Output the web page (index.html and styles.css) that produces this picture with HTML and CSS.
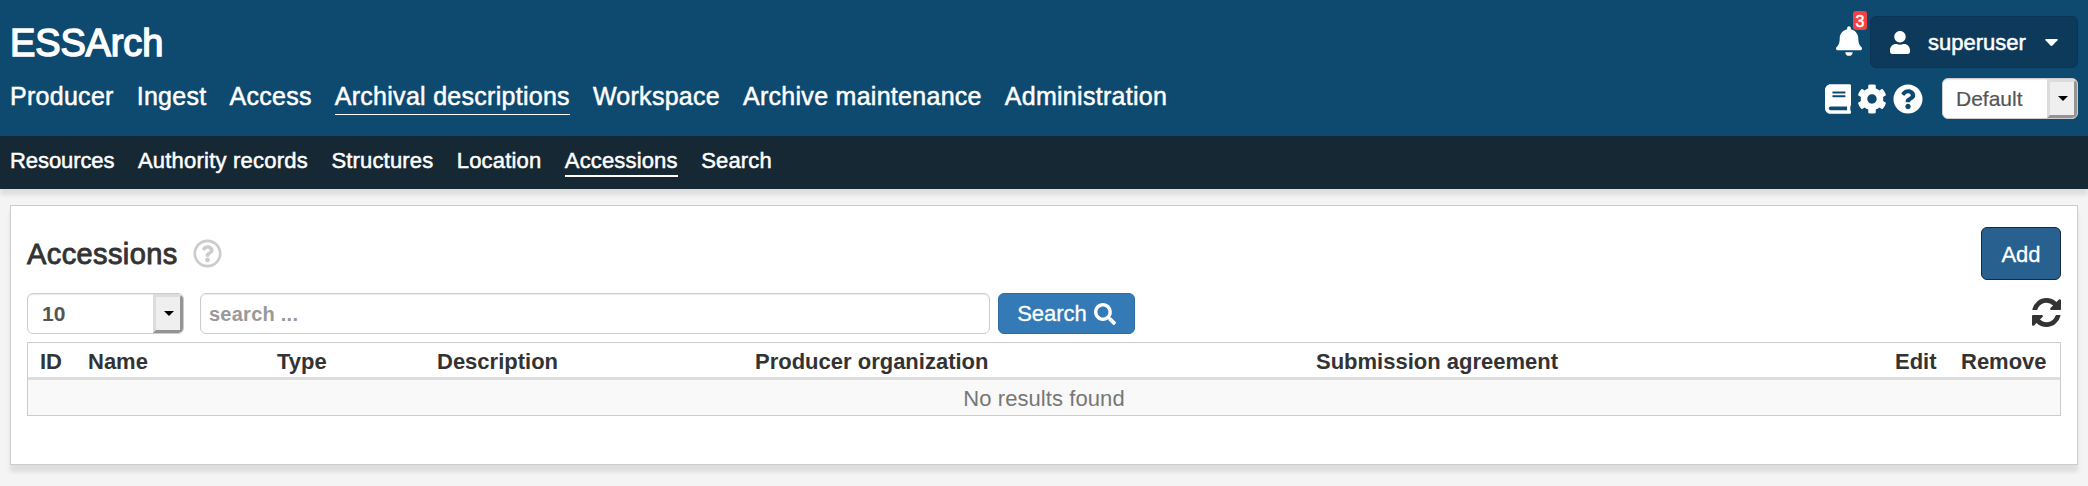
FILE: index.html
```html
<!DOCTYPE html>
<html lang="en">
<head>
<meta charset="utf-8">
<title>ESSArch</title>
<link rel="stylesheet" href="styles.css">
</head>
<body>
<header class="top">
  <div class="brand-col">
    <h1 class="brand">ESSArch</h1>
    <nav class="nav">
      <a>Producer</a><a>Ingest</a><a>Access</a><a class="active">Archival descriptions</a><a>Workspace</a><a>Archive maintenance</a><a>Administration</a>
    </nav>
  </div>
  <div class="tools">
    <div class="tool-row user-row">
      <div class="bell">
        <svg viewBox="0 0 448 512" width="26" height="30"><path d="M224 512c35.32 0 63.97-28.65 63.97-64H160.03c0 35.35 28.65 64 63.97 64zm215.39-149.71c-19.32-20.76-55.47-51.99-55.47-154.29 0-77.7-54.48-139.9-127.94-155.16V32c0-17.67-14.32-32-31.98-32s-31.98 14.33-31.98 32v20.84C118.56 68.1 64.08 130.3 64.08 208c0 102.3-36.15 133.53-55.47 154.29-6 6.45-8.66 14.16-8.61 21.71.11 16.4 12.98 32 32.1 32h383.8c19.12 0 32-15.6 32.1-32 .05-7.55-2.61-15.27-8.61-21.71z"/></svg>
        <span class="badge">3</span>
      </div>
      <div class="user">
        <svg viewBox="0 0 448 512" width="20" height="23"><path d="M224 256c70.700 0 128-57.300 128-128S294.700 0 224 0 96 57.300 96 128s57.300 128 128 128zm89.600 32h-16.700c-22.200 10.200-46.900 16-72.900 16s-50.600-5.800-72.900-16h-16.700C60.200 288 0 348.200 0 422.400V464c0 26.500 21.500 48 48 48h352c26.500 0 48-21.500 48-48v-41.600c0-74.200-60.200-134.400-134.400-134.400z"/></svg>
        <span class="user-name">superuser</span>
        <svg class="caret" viewBox="0 0 13 7" width="13" height="7"><path d="M1 0h11q1.400 .3.500 1.300l-5 5.200q-1 .9-2 0l-5-5.200Q-.4.300 1 0z"/></svg>
      </div>
    </div>
    <div class="tool-row icon-row">
      <svg viewBox="0 0 448 512" width="26" height="30"><path d="M448 360V24c0-13.300-10.700-24-24-24H96C43 0 0 43 0 96v320c0 53 43 96 96 96h328c13.300 0 24-10.700 24-24v-16c0-7.500-3.500-14.300-8.900-18.700-4.200-15.400-4.200-59.300 0-74.700 5.400-4.300 8.900-11.100 8.900-18.600zM128 134c0-3.300 2.700-6 6-6h212c3.300 0 6 2.700 6 6v20c0 3.300-2.700 6-6 6H134c-3.300 0-6-2.700-6-6v-20zm0 64c0-3.300 2.700-6 6-6h212c3.300 0 6 2.700 6 6v20c0 3.300-2.700 6-6 6H134c-3.300 0-6-2.700-6-6v-20zm253.400 250H96c-17.700 0-32-14.300-32-32 0-17.600 14.400-32 32-32h285.400c-1.900 17.100-1.900 46.900 0 64z"/></svg>
      <svg viewBox="0 0 512 512" width="30" height="30"><path d="M487.400 315.700l-42.600-24.600c4.300-23.200 4.300-47 0-70.200l42.600-24.600c4.900-2.800 7.100-8.600 5.500-14-11.100-35.600-30-67.800-54.700-94.600-3.800-4.100-10-5.100-14.800-2.300L380.800 110c-17.900-15.400-38.500-27.300-60.800-35.100V25.800c0-5.600-3.900-10.500-9.400-11.700-36.700-8.200-74.300-7.800-109.200 0-5.500 1.200-9.400 6.100-9.400 11.700V75c-22.200 7.900-42.800 19.800-60.800 35.100L88.700 85.500c-4.900-2.800-11-1.900-14.800 2.300-24.700 26.700-43.600 58.900-54.700 94.600-1.700 5.400.6 11.200 5.500 14L67.300 221c-4.300 23.200-4.300 47 0 70.200l-42.600 24.600c-4.900 2.800-7.100 8.600-5.500 14 11.100 35.600 30 67.800 54.700 94.600 3.800 4.100 10 5.100 14.800 2.300l42.600-24.600c17.900 15.400 38.500 27.300 60.800 35.100v49.200c0 5.600 3.900 10.500 9.400 11.700 36.700 8.200 74.300 7.800 109.200 0 5.500-1.200 9.400-6.100 9.400-11.700v-49.200c22.200-7.900 42.800-19.800 60.800-35.100l42.600 24.600c4.900 2.800 11 1.900 14.800-2.300 24.700-26.700 43.600-58.900 54.700-94.600 1.500-5.500-.7-11.300-5.600-14.100zM256 336c-44.100 0-80-35.900-80-80s35.900-80 80-80 80 35.900 80 80-35.900 80-80 80z"/></svg>
      <svg viewBox="0 0 512 512" width="30" height="30"><path d="M504 256c0 136.997-111.043 248-248 248S8 392.997 8 256C8 119.083 119.043 8 256 8s248 111.083 248 248zM262.655 90c-54.497 0-89.255 22.957-116.549 63.758-3.536 5.286-2.353 12.415 2.715 16.258l34.699 26.310c5.205 3.947 12.621 3.008 16.665-2.122 17.864-22.658 30.113-35.797 57.303-35.797 20.429 0 45.698 13.148 45.698 32.958 0 14.976-12.363 22.667-32.534 33.976C247.128 238.528 216 254.941 216 296v4c0 6.627 5.373 12 12 12h56c6.627 0 12-5.373 12-12v-1.333c0-28.462 83.186-29.647 83.186-106.667 0-58.002-60.165-102-116.531-102zM256 338c-25.365 0-46 20.635-46 46 0 25.364 20.635 46 46 46s46-20.636 46-46c0-25.365-20.635-46-46-46z"/></svg>
      <div class="combo combo-default"><span class="combo-text">Default</span><span class="combo-btn"><i class="tri"></i></span></div>
    </div>
  </div>
</header>
<nav class="subnav">
  <a class="tight">Resources</a><a class="loose">Authority records</a><a>Structures</a><a>Location</a><a class="active">Accessions</a><a>Search</a>
</nav>
<main class="panel">
  <div class="title-row">
    <h2 class="title">Accessions</h2>
    <svg class="help" viewBox="0 0 512 512" width="29" height="29"><path d="M256 8C119.043 8 8 119.083 8 256c0 136.997 111.043 248 248 248s248-111.003 248-248C504 119.083 392.957 8 256 8zm0 448c-110.532 0-200-89.431-200-200 0-110.495 89.472-200 200-200 110.491 0 200 89.471 200 200 0 110.530-89.431 200-200 200zm107.244-255.200c0 67.052-72.421 68.084-72.421 92.863V300c0 6.627-5.373 12-12 12h-45.647c-6.627 0-12-5.373-12-12v-8.659c0-35.745 27.100-50.034 47.579-61.516 17.561-9.845 28.324-16.541 28.324-29.579 0-17.246-21.999-28.693-39.784-28.693-23.189 0-33.894 10.977-48.942 29.969-4.057 5.120-11.460 6.071-16.666 2.124l-27.824-21.098c-5.107-3.872-6.251-11.066-2.644-16.363C184.846 131.491 214.940 112 261.794 112c49.071 0 101.450 38.304 101.450 88.800zM298 368c0 23.159-18.841 42-42 42s-42-18.841-42-42 18.841-42 42-42 42 18.841 42 42z"/></svg>
    <button class="btn add">Add</button>
  </div>
  <div class="filter-row">
    <div class="combo combo-count"><span class="combo-text">10</span><span class="combo-btn"><i class="tri"></i></span></div>
    <input class="search-input" type="text" placeholder="search ...">
    <button class="btn search">Search <svg viewBox="0 0 512 512" width="22" height="22"><path d="M505 442.700L405.300 343c-4.500-4.500-10.600-7-17-7H372c27.600-35.300 44-79.700 44-128C416 93.100 322.900 0 208 0S0 93.100 0 208s93.100 208 208 208c48.300 0 92.700-16.400 128-44v16.300c0 6.400 2.500 12.500 7 17l99.700 99.700c9.400 9.400 24.600 9.400 33.900 0l28.300-28.300c9.400-9.400 9.400-24.600.1-34zM208 336c-70.700 0-128-57.200-128-128 0-70.700 57.200-128 128-128 70.700 0 128 57.200 128 128 0 70.700-57.200 128-128 128z"/></svg></button>
    <svg class="refresh" viewBox="0 0 1536 1536" width="29" height="29"><path d="M1511 928q0 5-1 7-64 268-268 434.500T764 1536q-146 0-282.500-55T238 1324l-129 129q-19 19-45 19t-45-19-19-45V960q0-26 19-45t45-19h448q26 0 45 19t19 45-19 45l-137 137q71 66 161 102t187 36q134 0 250-65t186-179q11-17 53-117 8-23 30-23h192q13 0 22.500 9.500t9.500 22.500zm25-800v448q0 26-19 45t-45 19h-448q-26 0-45-19t-19-45 19-45l138-138Q969 256 768 256q-134 0-250 65T332 500q-11 17-53 117-8 23-30 23H50q-13 0-22.500-9.500T18 608v-7q65-268 270-434.500T768 0q146 0 284 55.500T1297 212l130-129q19-19 45-19t45 19 19 45z"/></svg>
  </div>
  <table class="grid">
    <colgroup><col class="c-id"><col class="c-name"><col class="c-type"><col class="c-desc"><col class="c-prod"><col class="c-sub"><col class="c-edit"><col class="c-rem"></colgroup>
    <thead><tr><th>ID</th><th>Name</th><th>Type</th><th>Description</th><th>Producer organization</th><th>Submission agreement</th><th>Edit</th><th>Remove</th></tr></thead>
    <tbody><tr><td colspan="8">No results found</td></tr></tbody>
  </table>
</main>
</body>
</html>
```
FILE: styles.css
```css
* { box-sizing: border-box; }
body {
  margin: 0;
  height: 486px;
  overflow: hidden;
  background: #f4f4f4;
  color: #333;
  font-family: "Liberation Sans", Arial, sans-serif;
  font-size: 22px;
}
svg { display: block; fill: currentColor; flex: none; }
h1, h2 { margin: 0; font-weight: 400; }

.top {
  display: flex;
  justify-content: space-between;
  height: 136px;
  padding: 0 10px;
  background: #0e4a70;
  color: #fff;
}
.brand {
  padding-top: 21px;
  font-size: 38px;
  line-height: 44px;
  letter-spacing: -.15px;
  -webkit-text-stroke: 1.5px currentColor;
}
.nav { display: flex; gap: 23px; padding-top: 16px; }
.nav a {
  font-size: 25px;
  line-height: 30px;
  height: 34px;
  letter-spacing: .28px;
  white-space: nowrap;
  -webkit-text-stroke: .5px currentColor;
}
.nav .active { border-bottom: 1px solid #fff; }

.tool-row { display: flex; justify-content: flex-end; }
.user-row { padding-top: 16px; }
.bell { position: relative; padding-top: 10px; margin-right: 8px; }
.badge {
  position: absolute;
  left: 17px;
  top: -5px;
  width: 14px;
  height: 19px;
  border-radius: 3px;
  background: #f44040;
  font-size: 16px;
  line-height: 22px;
  text-align: center;
  -webkit-text-stroke: .5px currentColor;
}
.user {
  display: flex;
  align-items: center;
  width: 208px;
  height: 52px;
  padding: 0 19px;
  border: 1px solid #0b3453;
  border-radius: 6px;
  background: #0d3a5b;
}
.user-name { margin: 1px 19px 0 18px; -webkit-text-stroke: .5px currentColor; }
.icon-row { padding-top: 10px; }
.icon-row > svg { margin-top: 6px; }
.icon-row > svg:nth-of-type(1) { margin-right: 6px; }
.icon-row > svg:nth-of-type(2) { margin-right: 6px; }

.combo {
  display: flex;
  height: 41px;
  overflow: hidden;
  border: 1px solid #ccc;
  border-radius: 6px;
  background: #fff;
  color: #555;
  font-size: 21px;
  line-height: 39px;
  box-shadow: inset 0 1px 1px rgba(0, 0, 0, .08);
}
.combo-text { flex: 1; }
.combo-btn {
  width: 30px;
  padding: 14px 0 0 8px;
  border: 3px solid;
  border-color: #dcdcdc #949494 #949494 #dcdcdc;
  background: #efefef;
}
.tri {
  display: block;
  width: 10px;
  border: 5px solid transparent;
  border-top: 5px solid #000;
  border-bottom: 0;
}
.combo-default { width: 136px; margin-left: 19px; }
.combo-default .combo-text { padding-left: 13px; -webkit-text-stroke: .2px currentColor; }
.combo-count { width: 157px; font-weight: 700; }
.combo-count .combo-text { padding-left: 14px; }

.subnav {
  display: flex;
  gap: 23.5px;
  height: 53px;
  padding: 12px 10px 0;
  background: #152833;
  color: #fff;
  box-shadow: 0 6px 4px #dedede;
}
.subnav a {
  height: 29px;
  line-height: 25px;
  letter-spacing: .16px;
  white-space: nowrap;
  -webkit-text-stroke: .5px currentColor;
}
.subnav .tight { letter-spacing: -.08px; }
.subnav .loose { letter-spacing: .22px; }
.subnav .active { border-bottom: 2px solid #fff; }

.panel {
  height: 260px;
  margin: 16px 10px 0;
  padding: 21px 16px 0;
  border: 1px solid #ccc;
  background: #fff;
  box-shadow: 0 7px 4px #dedede;
}
.title-row { display: flex; align-items: center; height: 53px; }
.title {
  padding-top: 2px;
  font-size: 29px;
  letter-spacing: .4px;
  -webkit-text-stroke: .9px currentColor;
}
.help { margin-left: 15px; color: #ccc; }
.btn {
  display: flex;
  align-items: center;
  justify-content: center;
  gap: 7px;
  padding: 0;
  border: 1px solid #2e6da4;
  border-radius: 6px;
  background: #337ab7;
  color: #fff;
  font: inherit;
  -webkit-text-stroke: .3px currentColor;
}
.add {
  width: 80px;
  height: 53px;
  padding-top: 2px;
  margin-left: auto;
  border-color: #122b40;
  background: #286090;
}
.filter-row { display: flex; height: 41px; margin-top: 13px; }
.search-input {
  width: 790px;
  margin-left: 16px;
  padding: 2px 8px 0;
  border: 1px solid #ccc;
  border-radius: 6px;
  font: 700 20px "Liberation Sans", Arial, sans-serif;
  letter-spacing: .25px;
  box-shadow: inset 0 1px 1px rgba(0, 0, 0, .08);
}
.search-input::placeholder { color: #999; opacity: 1; }
.search { width: 137px; margin-left: 8px; padding-top: 1px; }
.refresh { margin: 5px 0 0 auto; }

.grid {
  width: 2034px;
  margin-top: 8px;
  border: 1px solid #ccc;
  border-spacing: 0;
  table-layout: fixed;
}
.grid th {
  height: 37px;
  padding: 3px 0 0 12px;
  border-bottom: 3px solid #ddd;
  text-align: left;
  line-height: 31px;
  white-space: nowrap;
}
.grid td {
  height: 35px;
  padding: 2px 0 0;
  background: #f9f9f9;
  color: #777;
  text-align: center;
  letter-spacing: .08px;
}
.c-id { width: 48px; }
.c-name { width: 189px; }
.c-type { width: 160px; }
.c-desc { width: 318px; }
.c-prod { width: 561px; }
.c-sub { width: 579px; }
.c-edit { width: 66px; }
```
